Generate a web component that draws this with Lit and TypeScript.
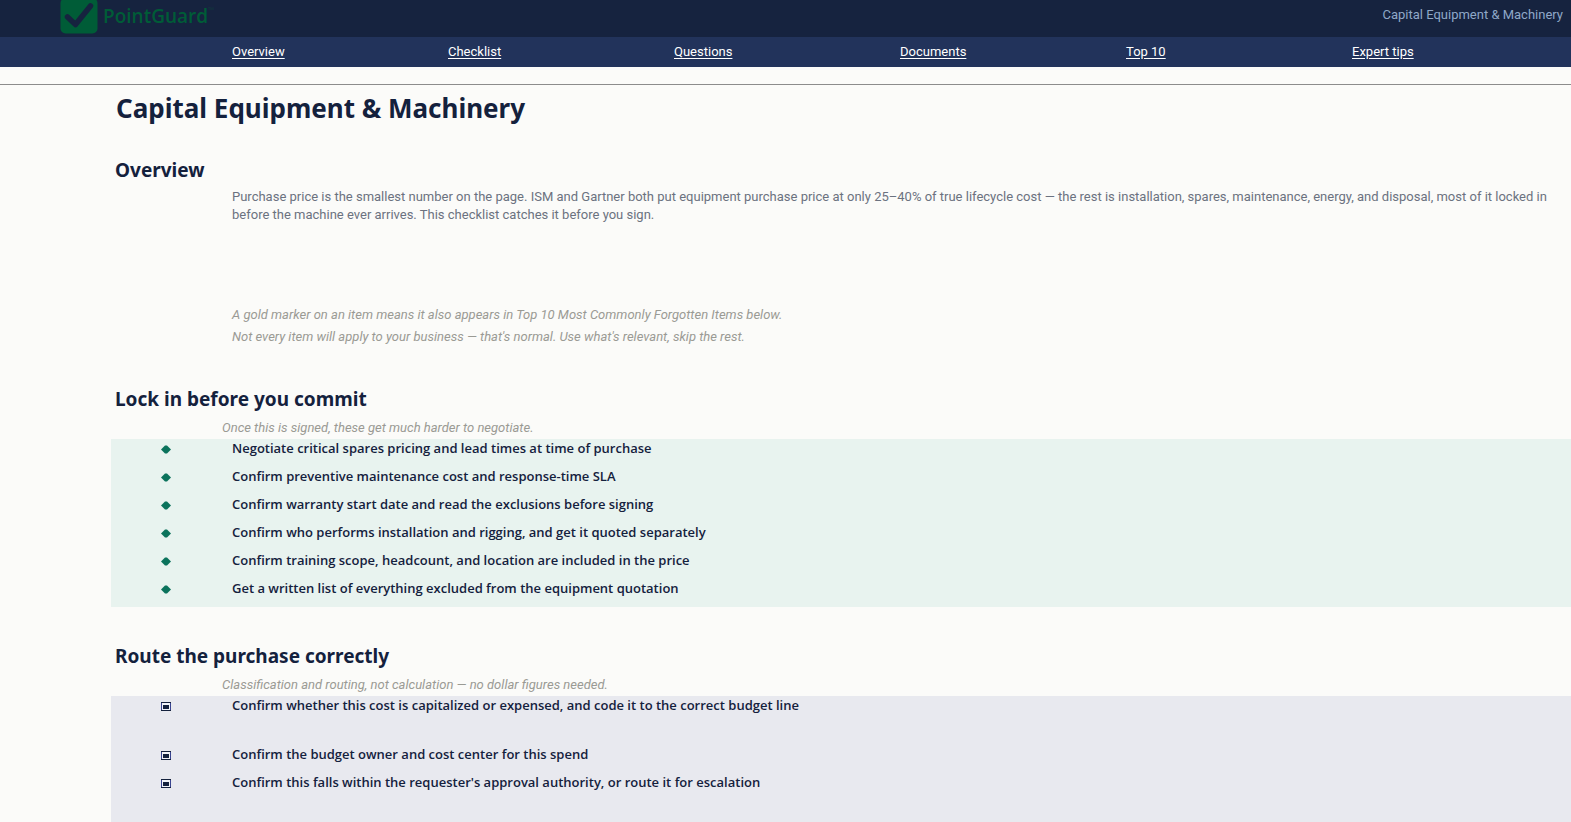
import { LitElement, html, css } from "lit";
import { customElement } from "lit/decorators.js";

interface Item {
  text: string;
  tall?: boolean;
}

interface Section {
  id: string;
  title: string;
  hint: string;
  tone: "teal" | "slate";
  items: Item[];
}

const NAV = [
  ["Overview", "#overview"],
  ["Checklist", "#commit"],
  ["Questions", "#questions"],
  ["Documents", "#documents"],
  ["Top 10", "#top-10"],
  ["Expert tips", "#expert-tips"],
];

const SECTIONS: Section[] = [
  {
    id: "commit",
    title: "Lock in before you commit",
    hint: "Once this is signed, these get much harder to negotiate.",
    tone: "teal",
    items: [
      { text: "Negotiate critical spares pricing and lead times at time of purchase" },
      { text: "Confirm preventive maintenance cost and response-time SLA" },
      { text: "Confirm warranty start date and read the exclusions before signing" },
      { text: "Confirm who performs installation and rigging, and get it quoted separately" },
      { text: "Confirm training scope, headcount, and location are included in the price" },
      { text: "Get a written list of everything excluded from the equipment quotation" },
    ],
  },
  {
    id: "route",
    title: "Route the purchase correctly",
    hint: "Classification and routing, not calculation — no dollar figures needed.",
    tone: "slate",
    items: [
      { text: "Confirm whether this cost is capitalized or expensed, and code it to the correct budget line", tall: true },
      { text: "Confirm the budget owner and cost center for this spend" },
      { text: "Confirm this falls within the requester's approval authority, or route it for escalation", tall: true },
    ],
  },
];

@customElement("app-root")
export class AppRoot extends LitElement {
  static styles = css`
    :host {
      display: block;
      overflow: hidden;
      background: #fbfbf9;
      color: #14213d;
      font: 13px/18px Roboto, "Noto Sans", sans-serif;
    }
    .top {
      display: flex;
      justify-content: space-between;
      height: 37px;
      padding: 0 8px 0 60px;
      background: #16233f;
      color: #8fa8c8;
    }
    .brand {
      display: flex;
      gap: 5px;
      color: #005c37;
      font-family: "Open Sans", "Noto Sans", sans-serif;
      font-size: 19px;
      line-height: 32px;
      font-weight: 600;
    }
    .badge {
      width: 38px;
      height: 34px;
    }
    .tm {
      font-size: 8px;
      line-height: 20px;
      vertical-align: top;
      color: #12373d;
    }
    .topic {
      padding-top: 6px;
    }
    .nav {
      display: grid;
      grid-template-columns: 216fr repeat(4, 226fr) 219fr;
      padding: 6px 0 6px 232px;
      background: #22335b;
    }
    .nav a {
      justify-self: start;
      color: #fff;
      text-underline-offset: 2px;
    }
    .rule {
      height: 17px;
      border-bottom: 1px solid #8c8c8c;
    }
    h1,
    h2,
    p,
    ul {
      margin: 0;
      padding: 0;
    }
    h1,
    h2 {
      font-family: "Noto Sans", "Open Sans", sans-serif;
    }
    h1 {
      padding: 10px 0 0 116px;
      font-size: 26px;
      line-height: 26px;
    }
    h2 {
      padding: 35px 0 4px 115px;
      font-size: 19px;
      line-height: 28px;
    }
    .intro {
      padding: 0 0 82px 232px;
      color: #6b7280;
      white-space: nowrap;
    }
    .note {
      padding: 0 0 4px 232px;
    }
    .note,
    .hint {
      color: #9a9a94;
      font-style: italic;
    }
    .hint {
      padding: 2px 0 2px 222px;
    }
    .list {
      margin-left: 111px;
      list-style: none;
      font-family: "Open Sans", "Noto Sans", sans-serif;
      font-weight: 600;
    }
    .teal {
      background: #e8f3ef;
    }
    .slate {
      background: #e8e9ef;
    }
    .row {
      display: grid;
      grid-template-columns: 110px 1fr;
      gap: 11px;
      height: 28px;
    }
    .tall {
      height: 49px;
    }
    .mark {
      justify-self: center;
      width: 12px;
      height: 20px;
    }
  `;

  private mark(tone: string) {
    return tone === "teal"
      ? html`<svg class="mark" viewBox="0 0 12 20" aria-hidden="true">
          <path d="M1 10.5 5 6.5h2l4 4-4 4H5z" fill="#0b735c" />
        </svg>`
      : html`<svg class="mark" viewBox="0 0 12 20" aria-hidden="true">
          <path d="M1.5 6.5h9v8h-9z" fill="#f2f3f8" stroke="#3a4590" />
          <path d="M1 6.5h10M1 14.5h10" stroke="#14213d" />
          <path d="M3 9h6v4h-6z" fill="#14213d" />
        </svg>`;
  }

  render() {
    return html`
      <header>
        <div class="top">
          <div class="brand">
            <svg class="badge" viewBox="0 0 38 34" aria-hidden="true">
              <rect x="0.5" y="-2" width="37" height="35.5" rx="5" fill="#005c37" />
              <path d="M7.5 17 15.5 24.5 30.5 6" fill="none" stroke="#16233f" stroke-width="5.5" stroke-linecap="round" stroke-linejoin="round" />
            </svg>
            <span>PointGuard<span class="tm">™</span></span>
          </div>
          <div class="topic">Capital Equipment &amp; Machinery</div>
        </div>
        <nav class="nav">${NAV.map(([label, href]) => html`<a href=${href}>${label}</a>`)}</nav>
        <div class="rule"></div>
      </header>
      <main>
        <h1>Capital Equipment &amp; Machinery</h1>
        <h2 id="overview">Overview</h2>
        <p class="intro">
          Purchase price is the smallest number on the page. ISM and Gartner both put equipment purchase price at only
          25–40% of true lifecycle cost — the rest is installation, spares, maintenance, energy, and disposal, most of it locked in<br />
          before the machine ever arrives. This checklist catches it before you sign.
        </p>
        <p class="note">A gold marker on an item means it also appears in Top 10 Most Commonly Forgotten Items below.</p>
        <p class="note">Not every item will apply to your business — that's normal. Use what's relevant, skip the rest.</p>
        ${SECTIONS.map(
          (s) => html`
            <section>
              <h2 id=${s.id}>${s.title}</h2>
              <p class="hint">${s.hint}</p>
              <ul class="list ${s.tone}">
                ${s.items.map(
                  (i) => html`<li class="row ${i.tall ? "tall" : ""}">${this.mark(s.tone)}<span>${i.text}</span></li>`
                )}
              </ul>
            </section>
          `
        )}
      </main>
    `;
  }
}
